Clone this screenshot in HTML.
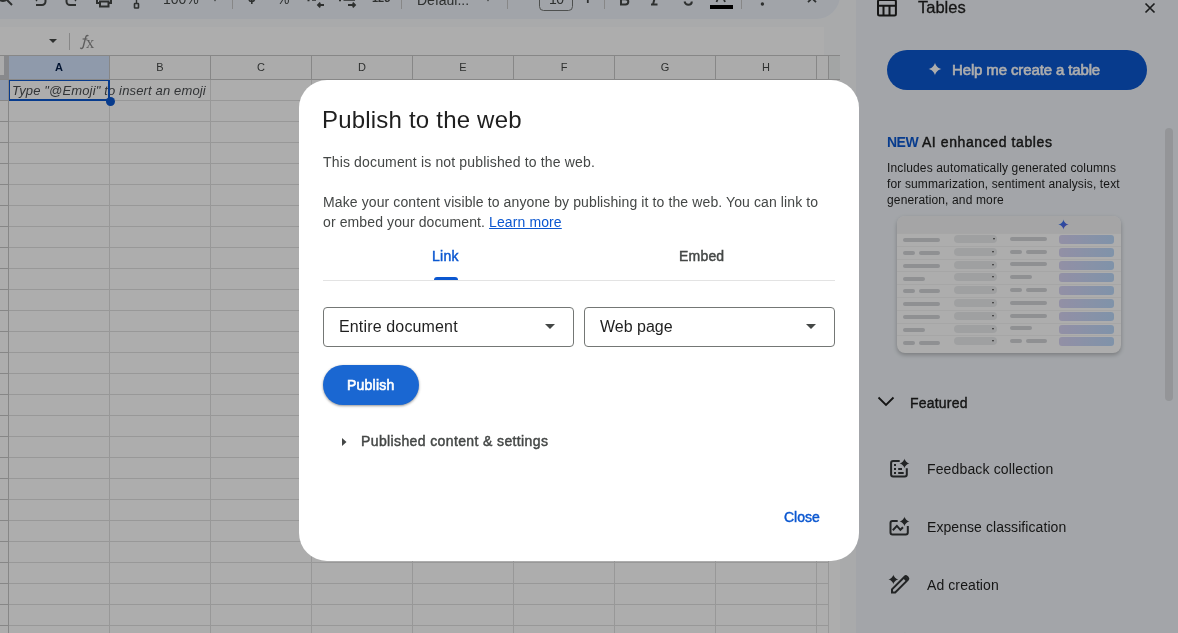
<!DOCTYPE html>
<html><head><meta charset="utf-8">
<style>
*{box-sizing:border-box;margin:0;padding:0}
html,body{width:1178px;height:633px;overflow:hidden;background:#f9fbfd;font-family:"Liberation Sans",sans-serif;position:relative}
.a{position:absolute}
.t{position:absolute;white-space:nowrap;line-height:1;will-change:transform}
</style></head><body>

<!-- ===== SHEETS BACKGROUND ===== -->
<div id="app" class="a" style="left:0;top:0;width:1178px;height:633px;background:#f9fbfd">
  <!-- toolbar pill -->
  <div class="a" style="left:-40px;top:-30px;width:880px;height:48.7px;background:#edf2fa;border-radius:24px"></div>
  <svg class="a" style="left:0;top:0" width="840" height="18" viewBox="0 0 840 18" fill="none" stroke="#444746" stroke-width="2">
    <!-- search -->
    <circle cx="3" cy="-4.5" r="5.5" stroke-width="2"/>
    <path d="M6.8 -0.2 L12 5" stroke-width="2"/>
    <!-- undo -->
    <path d="M36 5 H42 A3.5 3.5 0 0 0 45.5 1.5 V-2" />
    <path d="M37 1 L36 0" stroke-width="1.5"/>
    <!-- redo -->
    <path d="M76 5 H70 A3.5 3.5 0 0 1 66.5 1.5 V-2" />
    <path d="M75 1 L76 0" stroke-width="1.5"/>
    <!-- print -->
    <path d="M97 -2 V3 H100 M111 -2 V3 H108" />
    <rect x="100" y="1.5" width="8.5" height="5" />
    <!-- paint format -->
    <path d="M136.5 0 V3" stroke-width="1.4"/>
    <rect x="134.5" y="3.5" width="4" height="4.5" rx="0.5" stroke-width="1.6"/>
    <!-- zoom dropdown dot -->
    <path d="M213 -2 H217 L215 1.5Z" fill="#444746" stroke="none"/>
    <path d="M486 -2 H490 L488 1.5Z" fill="#444746" stroke="none"/>
    <!-- separators -->
    <path d="M232.5 0 V9 M401.5 0 V9 M507.5 0 V9 M604.5 0 V9 M741.5 0 V9" stroke="#c7c7c7" stroke-width="1"/>
    <!-- $ -->
    <path d="M251.8 -3 V4" stroke-width="1.6"/>
    <path d="M249 -1 Q249 1.5 251.8 1.5 Q254.5 1.5 254.5 -1" stroke-width="1.6"/>
    <!-- decimal -->
    <path d="M307.5 0.5 H309.5 M312 0 H316" stroke-width="1.6"/>
    <path d="M324 5 H318 M320.3 2.7 L318 5 L320.3 7.3" stroke-width="1.8"/>
    <path d="M339 0.5 H341 M343.5 0 H355" stroke-width="1.6"/>
    <path d="M348 5 H355 M352.7 2.7 L355 5 L352.7 7.3" stroke-width="1.8"/>
    <!-- font size box -->
    <rect x="539.5" y="-8" width="33" height="18.5" rx="4" stroke="#747775" stroke-width="1"/>
    <!-- plus -->
    <path d="M587.8 -4 V3" stroke-width="1.8"/>
    <!-- B -->
    <path d="M621 -3 V4.5 H625.5 Q628.3 4.5 628.3 1.8 Q628.3 -0.8 625.5 -0.8 H621" stroke-width="2"/>
    <!-- I -->
    <path d="M651 4.5 H657.5 M655 -3 L653 4.5" stroke-width="2"/>
    <!-- S -->
    <path d="M684.5 1.5 Q685.5 4.8 688.3 4.8 Q691.8 4.8 691.8 1.5" stroke-width="2"/>
    <!-- A -->
    <path d="M716.5 2 L719 -4 M725 2 L722.5 -4" stroke-width="1.8"/>
    <!-- text color bar -->
    <rect x="710" y="5" width="23" height="4" fill="#000" stroke="none"/>
    <!-- more dots -->
    <circle cx="762.4" cy="4" r="1.7" fill="#444746" stroke="none"/>
    <circle cx="762.4" cy="-2" r="1.7" fill="#444746" stroke="none"/>
    <!-- collapse ^ -->
    <path d="M808 2.2 L812 -1.8 L816 2.2" stroke-width="1.8"/>
  </svg>
  <div class="t" style="left:163px;top:-8px;font-size:14px;color:#444746">100%</div>
  <div class="t" style="left:277px;top:-8px;font-size:14px;color:#444746">%</div>
  <div class="t" style="left:372px;top:-7px;font-size:11px;font-weight:bold;color:#444746">123</div>
  <div class="t" style="left:417px;top:-7px;font-size:14px;color:#444746">Defaul...</div>
  <div class="t" style="left:549px;top:-8.5px;font-size:14px;color:#444746;letter-spacing:-0.5px">10</div>

  <!-- formula bar -->
  <div class="a" style="left:0;top:27px;width:824px;height:28px;background:#fff"></div>
  <svg class="a" style="left:0;top:27px" width="120" height="28">
    <path d="M49 12 H57 L53 16 Z" fill="#444746"/>
    <path d="M69.5 6 V23" stroke="#c7c7c7" stroke-width="1"/>
  </svg>
  <svg class="a" style="left:0;top:0" width="100" height="55" fill="none" stroke="#8c8c8c" stroke-width="1.4"><path d="M80.4 47.6 Q81.6 49.8 83.1 47.2 L85.6 37.6 Q86.6 34.6 88.4 35.9"/><path d="M82.6 39 H87.4" stroke-width="1.2"/></svg>
  <div class="t" style="left:86px;top:35px;font-family:'Liberation Serif',serif;font-size:16.5px;color:#8c8c8c">x</div>

  <!-- grid header row -->
  <div class="a" style="left:0;top:55px;width:840px;height:1px;background:#c8c8c8"></div>
  <div class="a" style="left:0;top:56px;width:840px;height:23px;background:#fdfdfd"></div>
  <div class="a" style="left:9px;top:56px;width:100px;height:23px;background:#d3e3fd"></div>
  <div class="a" style="left:0;top:79px;width:840px;height:1px;background:#c8c8c8"></div>
  <!-- corner freeze bars -->
  <div class="a" style="left:0;top:75px;width:9px;height:4px;background:#c9cbcf"></div>
  <div class="a" style="left:4px;top:56px;width:5px;height:23px;background:#c9cbcf"></div>
  <!-- header col separators -->
  <div class="a" style="left:9px;top:56px;width:810px;height:23px;background:repeating-linear-gradient(90deg,transparent 0 100px,#c8c8c8 100px 101px)"></div>
  <div class="a" style="left:828px;top:56px;width:1px;height:23px;background:#c8c8c8"></div>
  <div class="a" style="left:829px;top:56px;width:11px;height:23px;background:#f1f3f4"></div>
  <!-- header letters -->
  <div class="t" style="left:9px;top:62px;width:100px;text-align:center;font-size:11px;font-weight:bold;color:#041e49">A</div>
  <div class="t" style="left:110px;top:62px;width:100px;text-align:center;font-size:11px;color:#444746">B</div>
  <div class="t" style="left:211px;top:62px;width:100px;text-align:center;font-size:11px;color:#444746">C</div>
  <div class="t" style="left:312px;top:62px;width:100px;text-align:center;font-size:11px;color:#444746">D</div>
  <div class="t" style="left:413px;top:62px;width:100px;text-align:center;font-size:11px;color:#444746">E</div>
  <div class="t" style="left:514px;top:62px;width:100px;text-align:center;font-size:11px;color:#444746">F</div>
  <div class="t" style="left:615px;top:62px;width:100px;text-align:center;font-size:11px;color:#444746">G</div>
  <div class="t" style="left:716px;top:62px;width:100px;text-align:center;font-size:11px;color:#444746">H</div>

  <!-- row header strip -->
  <div class="a" style="left:0;top:80px;width:8px;height:553px;background:#fff"></div>
  <div class="a" style="left:0;top:80px;width:8px;height:20px;background:#d3e3fd"></div>
  <div class="a" style="left:0;top:100px;width:8px;height:533px;background:repeating-linear-gradient(180deg,#c8c8c8 0 1px,transparent 1px 21px)"></div>
  <div class="a" style="left:8px;top:80px;width:1px;height:553px;background:#c8c8c8"></div>
  <!-- cells -->
  <div class="a" style="left:9px;top:80px;width:819px;height:553px;background:#fff"></div>
  <div class="a" style="left:9px;top:80px;width:819px;height:553px;background:repeating-linear-gradient(180deg,transparent 0 20px,#e1e1e1 20px 21px)"></div>
  <div class="a" style="left:9px;top:80px;width:820px;height:553px;background:repeating-linear-gradient(90deg,transparent 0 100px,#e1e1e1 100px 101px)"></div>
  <div class="a" style="left:828px;top:80px;width:1px;height:553px;background:#e1e1e1"></div>
  <div class="a" style="left:829px;top:80px;width:11px;height:553px;background:#fff"></div>
  <!-- A1 selection -->
  <div class="t" style="left:12px;top:84px;font-size:13px;font-style:italic;color:#4a4d50;letter-spacing:0.15px">Type "@Emoji" to insert an emoji</div>
  <div class="a" style="left:8px;top:79px;width:102px;height:22px;border:2px solid #0b57d0;clip-path:inset(1px 0 0 1px)"></div>
  <div class="a" style="left:105.5px;top:96.5px;width:9px;height:9px;border-radius:50%;background:#0b57d0"></div>

  <!-- ===== SIDE PANEL ===== -->
  <div class="a" style="left:856px;top:0;width:322px;height:633px;background:#f0f4f9"></div>
  <!-- tables icon -->
  <svg class="a" style="left:876px;top:-2px" width="22" height="20" fill="none" stroke="#1f1f1f" stroke-width="2">
    <rect x="2" y="2" width="17.9" height="15.6" rx="1.5"/>
    <path d="M2 7.7 H20 M7.5 7.7 V17.6 M13.5 7.7 V17.6"/>
  </svg>
  <div class="t" style="left:918px;top:-1px;font-size:16.5px;color:#1f1f1f;-webkit-text-stroke:0.3px #1f1f1f">Tables</div>
  <svg class="a" style="left:1143px;top:1px" width="14" height="14" stroke="#2a2b2d" stroke-width="1.7"><path d="M2.5 2.5 L11.5 11.5 M11.5 2.5 L2.5 11.5"/></svg>
  <!-- help button -->
  <div class="a" style="left:887px;top:50px;width:260px;height:40px;border-radius:20px;background:#0b57d0"></div>
  <svg class="a" style="left:928px;top:62px" width="14" height="14"><path d="M7 0.5 C7 3.10 10.90 7 13.5 7 C10.90 7 7 10.90 7 13.5 C7 10.90 3.10 7 0.5 7 C3.10 7 7 3.10 7 0.5Z" fill="#fff"/></svg>
  <div class="t" style="left:952px;top:62px;font-size:15px;color:#fff;letter-spacing:-0.13px;-webkit-text-stroke:0.6px #fff">Help me create a table</div>
  <!-- NEW AI -->
  <div class="t" style="left:887px;top:135px;font-size:14px;color:#1f1f1f;-webkit-text-stroke:0.45px #1f1f1f;letter-spacing:0.6px"><span style="color:#0b57d0;font-weight:bold;-webkit-text-stroke:0;letter-spacing:-0.5px">NEW</span> AI enhanced tables</div>
  <div class="a" style="left:887px;top:160px;width:260px;will-change:transform;font-size:12px;line-height:16px;color:#1f1f1f;letter-spacing:0.14px">Includes automatically generated columns<br>for summarization, sentiment analysis, text<br>generation, and more</div>
  <!-- illustration -->
  <div id="ill" class="a" style="left:897px;top:216px;width:224px;height:137px;border-radius:8px;background:#fff;box-shadow:0 2px 4px rgba(0,0,0,.25);overflow:hidden">
    <div class="a" style="left:0;top:0;width:224px;height:17px;background:#f3f4f5"></div>
    <svg class="a" style="left:161px;top:3px" width="11" height="11"><defs><linearGradient id="g1" x1="0" y1="0" x2="1" y2="1"><stop offset="0" stop-color="#217bfe"/><stop offset="1" stop-color="#6b5bd6"/></linearGradient></defs><path d="M5.5 0.2999999999999998 C5.5 2.64 8.36 5.5 10.7 5.5 C8.36 5.5 5.5 8.36 5.5 10.7 C5.5 8.36 2.64 5.5 0.2999999999999998 5.5 C2.64 5.5 5.5 2.64 5.5 0.2999999999999998Z" fill="url(#g1)"/></svg>
    <div class="a" style="left:0;top:17.0px;width:224px;height:1px;background:#f5f5f5"></div>
    <div class="a" style="left:6px;top:22.2px;width:37px;height:4px;border-radius:2px;background:#d3d5d8"></div>
    <div class="a" style="left:113px;top:20.8px;width:37px;height:4px;border-radius:2px;background:#d3d5d8"></div>
    <div class="a" style="left:57px;top:19.0px;width:43px;height:8px;border-radius:4px;background:#ebecee"></div>
    <div class="a" style="left:95.5px;top:22.0px;width:0;height:0;border-left:1.5px solid transparent;border-right:1.5px solid transparent;border-top:2px solid #444"></div>
    <div class="a" style="left:162px;top:19.0px;width:55px;height:9px;border-radius:3px;background:linear-gradient(90deg,#d8d4f4,#bcd9fa)"></div>
    <div class="a" style="left:0;top:29.8px;width:224px;height:1px;background:#f5f5f5"></div>
    <div class="a" style="left:6px;top:35.0px;width:12px;height:4px;border-radius:2px;background:#d3d5d8"></div>
    <div class="a" style="left:21.5px;top:35.0px;width:21.5px;height:4px;border-radius:2px;background:#d3d5d8"></div>
    <div class="a" style="left:113px;top:33.6px;width:12px;height:4px;border-radius:2px;background:#d3d5d8"></div>
    <div class="a" style="left:128.5px;top:33.6px;width:21.5px;height:4px;border-radius:2px;background:#d3d5d8"></div>
    <div class="a" style="left:57px;top:31.8px;width:43px;height:8px;border-radius:4px;background:#ebecee"></div>
    <div class="a" style="left:95px;top:34.8px;width:0;height:0;border-left:1.5px solid transparent;border-right:1.5px solid transparent;border-top:2px solid #444"></div>
    <div class="a" style="left:162px;top:31.8px;width:55px;height:9px;border-radius:3px;background:linear-gradient(90deg,#d8d4f4,#bcd9fa)"></div>
    <div class="a" style="left:0;top:42.6px;width:224px;height:1px;background:#f5f5f5"></div>
    <div class="a" style="left:6px;top:47.8px;width:37px;height:4px;border-radius:2px;background:#d3d5d8"></div>
    <div class="a" style="left:113px;top:46.4px;width:37px;height:4px;border-radius:2px;background:#d3d5d8"></div>
    <div class="a" style="left:57px;top:44.6px;width:43px;height:8px;border-radius:4px;background:#ebecee"></div>
    <div class="a" style="left:95px;top:47.6px;width:0;height:0;border-left:1.5px solid transparent;border-right:1.5px solid transparent;border-top:2px solid #444"></div>
    <div class="a" style="left:162px;top:44.6px;width:55px;height:9px;border-radius:3px;background:linear-gradient(90deg,#d8d4f4,#bcd9fa)"></div>
    <div class="a" style="left:0;top:55.4px;width:224px;height:1px;background:#f5f5f5"></div>
    <div class="a" style="left:6px;top:60.6px;width:22px;height:4px;border-radius:2px;background:#d3d5d8"></div>
    <div class="a" style="left:113px;top:59.2px;width:22px;height:4px;border-radius:2px;background:#d3d5d8"></div>
    <div class="a" style="left:57px;top:57.4px;width:43px;height:8px;border-radius:4px;background:#ebecee"></div>
    <div class="a" style="left:95px;top:60.4px;width:0;height:0;border-left:1.5px solid transparent;border-right:1.5px solid transparent;border-top:2px solid #444"></div>
    <div class="a" style="left:162px;top:57.4px;width:55px;height:9px;border-radius:3px;background:linear-gradient(90deg,#d8d4f4,#bcd9fa)"></div>
    <div class="a" style="left:0;top:68.2px;width:224px;height:1px;background:#f5f5f5"></div>
    <div class="a" style="left:6px;top:73.4px;width:12px;height:4px;border-radius:2px;background:#d3d5d8"></div>
    <div class="a" style="left:21.5px;top:73.4px;width:21.5px;height:4px;border-radius:2px;background:#d3d5d8"></div>
    <div class="a" style="left:113px;top:72.0px;width:12px;height:4px;border-radius:2px;background:#d3d5d8"></div>
    <div class="a" style="left:128.5px;top:72.0px;width:21.5px;height:4px;border-radius:2px;background:#d3d5d8"></div>
    <div class="a" style="left:57px;top:70.2px;width:43px;height:8px;border-radius:4px;background:#ebecee"></div>
    <div class="a" style="left:95px;top:73.2px;width:0;height:0;border-left:1.5px solid transparent;border-right:1.5px solid transparent;border-top:2px solid #444"></div>
    <div class="a" style="left:162px;top:70.2px;width:55px;height:9px;border-radius:3px;background:linear-gradient(90deg,#d8d4f4,#bcd9fa)"></div>
    <div class="a" style="left:0;top:81.0px;width:224px;height:1px;background:#f5f5f5"></div>
    <div class="a" style="left:6px;top:86.2px;width:37px;height:4px;border-radius:2px;background:#d3d5d8"></div>
    <div class="a" style="left:113px;top:84.8px;width:37px;height:4px;border-radius:2px;background:#d3d5d8"></div>
    <div class="a" style="left:57px;top:83.0px;width:43px;height:8px;border-radius:4px;background:#ebecee"></div>
    <div class="a" style="left:95px;top:86.0px;width:0;height:0;border-left:1.5px solid transparent;border-right:1.5px solid transparent;border-top:2px solid #444"></div>
    <div class="a" style="left:162px;top:83.0px;width:55px;height:9px;border-radius:3px;background:linear-gradient(90deg,#d8d4f4,#bcd9fa)"></div>
    <div class="a" style="left:0;top:93.8px;width:224px;height:1px;background:#f5f5f5"></div>
    <div class="a" style="left:6px;top:99.0px;width:37px;height:4px;border-radius:2px;background:#d3d5d8"></div>
    <div class="a" style="left:113px;top:97.6px;width:37px;height:4px;border-radius:2px;background:#d3d5d8"></div>
    <div class="a" style="left:57px;top:95.8px;width:43px;height:8px;border-radius:4px;background:#ebecee"></div>
    <div class="a" style="left:95px;top:98.8px;width:0;height:0;border-left:1.5px solid transparent;border-right:1.5px solid transparent;border-top:2px solid #444"></div>
    <div class="a" style="left:162px;top:95.8px;width:55px;height:9px;border-radius:3px;background:linear-gradient(90deg,#d8d4f4,#bcd9fa)"></div>
    <div class="a" style="left:0;top:106.6px;width:224px;height:1px;background:#f5f5f5"></div>
    <div class="a" style="left:6px;top:111.8px;width:22px;height:4px;border-radius:2px;background:#d3d5d8"></div>
    <div class="a" style="left:113px;top:110.4px;width:22px;height:4px;border-radius:2px;background:#d3d5d8"></div>
    <div class="a" style="left:57px;top:108.6px;width:43px;height:8px;border-radius:4px;background:#ebecee"></div>
    <div class="a" style="left:95px;top:111.6px;width:0;height:0;border-left:1.5px solid transparent;border-right:1.5px solid transparent;border-top:2px solid #444"></div>
    <div class="a" style="left:162px;top:108.6px;width:55px;height:9px;border-radius:3px;background:linear-gradient(90deg,#d8d4f4,#bcd9fa)"></div>
    <div class="a" style="left:0;top:119.4px;width:224px;height:1px;background:#f5f5f5"></div>
    <div class="a" style="left:6px;top:124.6px;width:12px;height:4px;border-radius:2px;background:#d3d5d8"></div>
    <div class="a" style="left:21.5px;top:124.6px;width:21.5px;height:4px;border-radius:2px;background:#d3d5d8"></div>
    <div class="a" style="left:113px;top:123.2px;width:12px;height:4px;border-radius:2px;background:#d3d5d8"></div>
    <div class="a" style="left:128.5px;top:123.2px;width:21.5px;height:4px;border-radius:2px;background:#d3d5d8"></div>
    <div class="a" style="left:57px;top:121.4px;width:43px;height:8px;border-radius:4px;background:#ebecee"></div>
    <div class="a" style="left:95px;top:124.4px;width:0;height:0;border-left:1.5px solid transparent;border-right:1.5px solid transparent;border-top:2px solid #444"></div>
    <div class="a" style="left:162px;top:121.4px;width:55px;height:9px;border-radius:3px;background:linear-gradient(90deg,#d8d4f4,#bcd9fa)"></div>
  </div>
  <!-- featured -->
  <svg class="a" style="left:877px;top:396px" width="18" height="12" fill="none" stroke="#1f1f1f" stroke-width="1.8"><path d="M1.5 1.5 L9 9 L16.5 1.5"/></svg>
  <div class="t" style="left:910px;top:396px;font-size:14px;color:#1f1f1f;letter-spacing:0.2px;-webkit-text-stroke:0.4px #1f1f1f">Featured</div>
  <!-- items -->
  <svg class="a" style="left:884px;top:452px" width="32" height="32" fill="none" stroke="#333537" stroke-width="2">
    <path d="M15.7 9.1 H9.1 Q7.1 9.1 7.1 11.1 V22.5 Q7.1 24.5 9.1 24.5 H20.8 Q22.8 24.5 22.8 22.5 V16.2"/>
    <path d="M20.5 6.5 C20.5 8.36 23.54 11.4 25.4 11.4 C23.54 11.4 20.5 14.44 20.5 16.3 C20.5 14.44 17.46 11.4 15.6 11.4 C17.46 11.4 20.5 8.36 20.5 6.5Z" fill="#333537" stroke="none"/>
    <path d="M10 13 H12 M10 17 H12 M10 21 H12 M14.2 17 H18 M14.2 21 H19.7" />
  </svg>
  <div class="t" style="left:927px;top:462px;font-size:14px;color:#1f1f1f;letter-spacing:0.14px">Feedback collection</div>
  <svg class="a" style="left:884px;top:510px" width="32" height="32" fill="none" stroke="#333537" stroke-width="2">
    <path d="M13.7 11.1 H8.5 Q6.5 11.1 6.5 13.1 V22.5 Q6.5 24.5 8.5 24.5 H21.8 Q23.8 24.5 23.8 22.5 V16.1"/>
    <path d="M20.5 6.5 C20.5 8.36 23.54 11.4 25.4 11.4 C23.54 11.4 20.5 14.44 20.5 16.3 C20.5 14.44 17.46 11.4 15.6 11.4 C17.46 11.4 20.5 8.36 20.5 6.5Z" fill="#333537" stroke="none"/>
    <path d="M8.8 20.2 L12.9 15.9 L16.4 19.8 L19 17.2" />
  </svg>
  <div class="t" style="left:927px;top:520px;font-size:14px;color:#1f1f1f;letter-spacing:0.07px">Expense classification</div>
  <svg class="a" style="left:884px;top:568px" width="32" height="32" fill="none" stroke="#333537" stroke-width="2">
    <path d="M9.4 6.5 C9.4 8.36 12.44 11.4 14.3 11.4 C12.44 11.4 9.4 14.44 9.4 16.3 C9.4 14.44 6.36 11.4 4.5 11.4 C6.36 11.4 9.4 8.36 9.4 6.5Z" fill="#333537" stroke="none"/>
    <path d="M8 24.5 V21.3 L20.6 8.7 Q21.8 7.6 23 8.7 L23.8 9.5 Q24.9 10.7 23.8 11.9 L11.2 24.5 Z" />
    <path d="M20.4 9.4 L23.1 12.1" stroke-width="3.2"/>
  </svg>
  <div class="t" style="left:927px;top:578px;font-size:14px;color:#1f1f1f;letter-spacing:0.09px">Ad creation</div>
  <svg class="a" style="left:884px;top:626px" width="32" height="7"><path d="M21 6.5 C21 8.36 24.04 11.4 25.9 11.4 C24.04 11.4 21 14.44 21 16.3 C21 14.44 17.96 11.4 16.1 11.4 C17.96 11.4 21 8.36 21 6.5Z" fill="#333537"/></svg>
  <!-- scrollbar -->
  <div class="a" style="left:1165px;top:128px;width:8px;height:273px;border-radius:4px;background:#dadce0"></div>
</div>

<!-- scrim -->
<div class="a" style="left:0;top:0;width:1178px;height:633px;background:rgba(0,0,0,0.32)"></div>

<!-- ===== DIALOG ===== -->
<div id="dlg" class="a" style="left:299px;top:80px;width:560px;height:481px;background:#fff;border-radius:28px">
  <div class="t" style="left:23px;top:28px;font-size:24px;color:#1f1f1f;letter-spacing:0.2px">Publish to the web</div>
  <div class="t" style="left:24px;top:75px;font-size:14px;color:#444746;letter-spacing:0.157px">This document is not published to the web.</div>
  <div class="t" style="left:24px;top:115px;font-size:14px;color:#444746;letter-spacing:0.11px">Make your content visible to anyone by publishing it to the web. You can link to</div>
  <div class="t" style="left:24px;top:135px;font-size:14px;color:#444746;letter-spacing:0.11px">or embed your document. <span style="color:#0b57d0;text-decoration:underline">Learn more</span></div>
  <!-- tabs -->
  <div class="t" style="left:133px;top:169px;font-size:14px;color:#0b57d0;letter-spacing:0.3px;-webkit-text-stroke:0.45px #0b57d0">Link</div>
  <div class="t" style="left:380px;top:169px;font-size:14px;color:#444746;letter-spacing:0.2px;-webkit-text-stroke:0.45px #444746">Embed</div>
  <div class="a" style="left:135px;top:197px;width:24px;height:3px;background:#0b57d0;border-radius:3px 3px 0 0"></div>
  <div class="a" style="left:24px;top:200px;width:512px;height:1px;background:#e3e3e3"></div>
  <!-- selects -->
  <div class="a" style="left:24px;top:227px;width:251px;height:40px;border:1px solid #747775;border-radius:4px"></div>
  <div class="t" style="left:40px;top:239px;font-size:16px;color:#1f1f1f;letter-spacing:0.15px">Entire document</div>
  <svg class="a" style="left:246px;top:244px" width="10" height="5"><path d="M0 0H10L5 5Z" fill="#444746"/></svg>
  <div class="a" style="left:285px;top:227px;width:251px;height:40px;border:1px solid #747775;border-radius:4px"></div>
  <div class="t" style="left:301px;top:239px;font-size:16px;color:#1f1f1f">Web page</div>
  <svg class="a" style="left:507px;top:244px" width="10" height="5"><path d="M0 0H10L5 5Z" fill="#444746"/></svg>
  <!-- publish button -->
  <div class="a" style="left:24px;top:285px;width:96px;height:40px;border-radius:20px;background:#1a67d2;box-shadow:0 1px 3px rgba(0,0,0,.3),0 1px 2px rgba(0,0,0,.15)"></div>
  <div class="t" style="left:48px;top:298px;font-size:14px;color:#fff;letter-spacing:0.22px;-webkit-text-stroke:0.6px #fff">Publish</div>
  <!-- published content -->
  <svg class="a" style="left:43px;top:358px" width="6" height="9"><path d="M0 0V8L4.5 4Z" fill="#444746"/></svg>
  <div class="t" style="left:62px;top:354px;font-size:14px;color:#444746;letter-spacing:0.38px;-webkit-text-stroke:0.45px #444746">Published content &amp; settings</div>
  <!-- close -->
  <div class="t" style="left:485px;top:430px;font-size:14px;color:#0b57d0;-webkit-text-stroke:0.45px #0b57d0">Close</div>
</div>

</body></html>
